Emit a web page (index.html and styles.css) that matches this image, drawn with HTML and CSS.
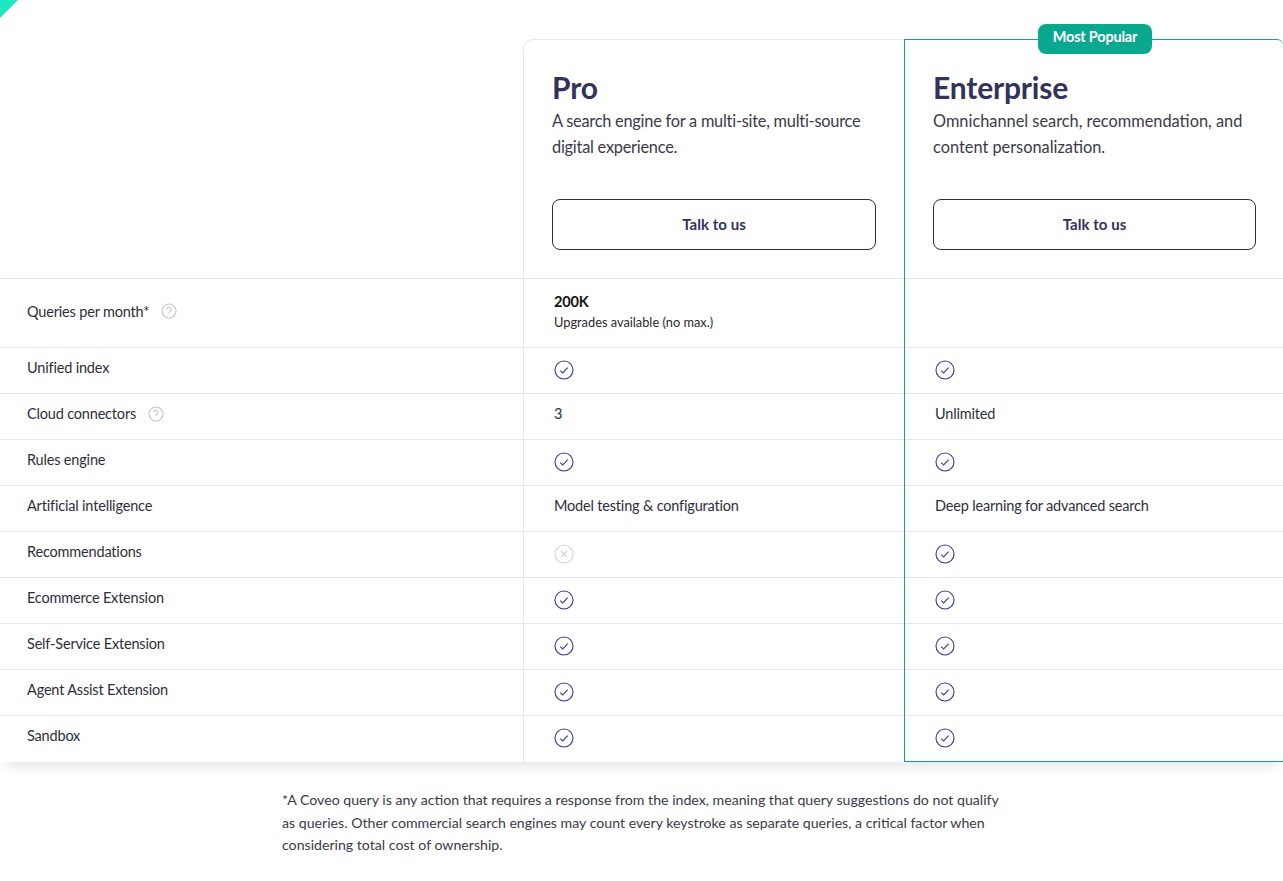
FILE: index.html
```html
<!DOCTYPE html>
<html lang="en">
<head>
<meta charset="utf-8">
<title>Plans</title>
<link rel="stylesheet" href="styles.css">
</head>
<body>
<div class="corner"></div>
<main class="page">
  <section class="plans">
    <div class="col col-labels">
      <div class="cell head"></div>
      <div class="cell tall">Queries per month*<svg class="help" viewBox="0 0 16 16"><circle cx="8" cy="8" r="7"/><path d="M5.9 6.3a2.1 2.1 0 1 1 3.3 1.7c-.8.5-1.2 1-1.2 1.8"/><path d="M8 11.4v.6"/></svg></div>
      <div class="cell">Unified index</div>
      <div class="cell">Cloud connectors<svg class="help" viewBox="0 0 16 16"><circle cx="8" cy="8" r="7"/><path d="M5.9 6.3a2.1 2.1 0 1 1 3.3 1.7c-.8.5-1.2 1-1.2 1.8"/><path d="M8 11.4v.6"/></svg></div>
      <div class="cell">Rules engine</div>
      <div class="cell">Artificial intelligence</div>
      <div class="cell">Recommendations</div>
      <div class="cell">Ecommerce Extension</div>
      <div class="cell">Self-Service Extension</div>
      <div class="cell">Agent Assist Extension</div>
      <div class="cell last">Sandbox</div>
    </div>

    <div class="col col-pro">
      <div class="cell head">
        <h2>Pro</h2>
        <p>A search engine for a multi-site, multi-source digital experience.</p>
        <a class="btn">Talk to us</a>
      </div>
      <div class="cell tall value"><div><strong>200K</strong><small>Upgrades available (no max.)</small></div></div>
      <div class="cell value"><svg class="check" viewBox="0 0 20 20"><circle cx="10" cy="10" r="9"/><path d="M6.3 10.6l2.4 2.3 5-5.3"/></svg></div>
      <div class="cell value">3</div>
      <div class="cell value"><svg class="check" viewBox="0 0 20 20"><circle cx="10" cy="10" r="9"/><path d="M6.3 10.6l2.4 2.3 5-5.3"/></svg></div>
      <div class="cell value">Model testing &amp; configuration</div>
      <div class="cell value"><svg class="cross" viewBox="0 0 20 20"><circle cx="10" cy="10" r="9"/><path d="M7 7l6 6M13 7l-6 6"/></svg></div>
      <div class="cell value"><svg class="check" viewBox="0 0 20 20"><circle cx="10" cy="10" r="9"/><path d="M6.3 10.6l2.4 2.3 5-5.3"/></svg></div>
      <div class="cell value"><svg class="check" viewBox="0 0 20 20"><circle cx="10" cy="10" r="9"/><path d="M6.3 10.6l2.4 2.3 5-5.3"/></svg></div>
      <div class="cell value"><svg class="check" viewBox="0 0 20 20"><circle cx="10" cy="10" r="9"/><path d="M6.3 10.6l2.4 2.3 5-5.3"/></svg></div>
      <div class="cell value last"><svg class="check" viewBox="0 0 20 20"><circle cx="10" cy="10" r="9"/><path d="M6.3 10.6l2.4 2.3 5-5.3"/></svg></div>
    </div>

    <div class="col col-ent">
      <span class="badge">Most Popular</span>
      <div class="cell head">
        <h2>Enterprise</h2>
        <p>Omnichannel search, recommendation, and content personalization.</p>
        <a class="btn">Talk to us</a>
      </div>
      <div class="cell tall value"></div>
      <div class="cell value"><svg class="check" viewBox="0 0 20 20"><circle cx="10" cy="10" r="9"/><path d="M6.3 10.6l2.4 2.3 5-5.3"/></svg></div>
      <div class="cell value">Unlimited</div>
      <div class="cell value"><svg class="check" viewBox="0 0 20 20"><circle cx="10" cy="10" r="9"/><path d="M6.3 10.6l2.4 2.3 5-5.3"/></svg></div>
      <div class="cell value">Deep learning for advanced search</div>
      <div class="cell value"><svg class="check" viewBox="0 0 20 20"><circle cx="10" cy="10" r="9"/><path d="M6.3 10.6l2.4 2.3 5-5.3"/></svg></div>
      <div class="cell value"><svg class="check" viewBox="0 0 20 20"><circle cx="10" cy="10" r="9"/><path d="M6.3 10.6l2.4 2.3 5-5.3"/></svg></div>
      <div class="cell value"><svg class="check" viewBox="0 0 20 20"><circle cx="10" cy="10" r="9"/><path d="M6.3 10.6l2.4 2.3 5-5.3"/></svg></div>
      <div class="cell value"><svg class="check" viewBox="0 0 20 20"><circle cx="10" cy="10" r="9"/><path d="M6.3 10.6l2.4 2.3 5-5.3"/></svg></div>
      <div class="cell value last"><svg class="check" viewBox="0 0 20 20"><circle cx="10" cy="10" r="9"/><path d="M6.3 10.6l2.4 2.3 5-5.3"/></svg></div>
    </div>
  </section>
  <p class="note">*A Coveo query is any action that requires a response from the index, meaning that query suggestions do not qualify as queries. Other commercial search engines may count every keystroke as separate queries, a critical factor when considering total cost of ownership.</p>
</main>
</body>
</html>
```
FILE: styles.css
```css
* { box-sizing: border-box; }
html, body { margin: 0; background: #fff; overflow: hidden; }
body {
  height: 881px;
  font-family: Lato, "Open Sans", sans-serif;
  color: #2b2b3a;
}
.corner {
  position: absolute;
  left: 0;
  top: 0;
  width: 0;
  height: 0;
  border-style: solid;
  border-width: 18px 18px 0 0;
  border-color: #1fe6be transparent transparent transparent;
}
.page { padding-top: 39px; }
.plans {
  display: grid;
  grid-template-columns: 523px 381px 379px;
  box-shadow: 0 9px 12px -6px rgba(40, 40, 60, .14);
}
.col { position: relative; background: #fff; }
.col-pro {
  border-left: 1px solid #e6e7ea;
  border-top: 1px solid #e6e7ea;
  border-top-left-radius: 10px;
}
.col-ent {
  border: 1px solid #1a9e9a;
  border-right: 0;
  border-top-right-radius: 6px;
}
.cell {
  height: 46px;
  border-bottom: 1px solid #e6e7ea;
  display: flex;
  align-items: center;
  padding: 0 0 6px 27px;
  font-size: 14.5px;
  letter-spacing: -.18px;
  color: #2e2e3a;
}
.cell.last { border-bottom: 0; height: 45px; }
.cell.tall { height: 69px; padding-bottom: 4px; }
.cell.head { height: 240px; display: block; padding: 0; }
.col-pro .cell.head { height: 239px; padding: 33px 28px 0 28px; }
.col-ent .cell.head { height: 239px; padding: 33px 27px 0 28px; }
.col-pro .value, .col-ent .value { padding-left: 30px; }
h2 {
  margin: 0;
  font-size: 30px;
  line-height: 28px;
  font-weight: 700;
  color: #33325a;
}
.head p {
  margin: 7px 0 0;
  height: 91px;
  font-size: 16.35px;
  line-height: 26px;
  letter-spacing: 0;
  color: #3a3a48;
}
.col-pro .head p { letter-spacing: -.24px; }
.btn {
  display: flex;
  align-items: center;
  justify-content: center;
  height: 51px;
  padding-bottom: 2px;
  border: 1px solid #2b2a48;
  border-radius: 8px;
  font-size: 15px;
  font-weight: 700;
  letter-spacing: .05px;
  color: #33325a;
}
.value strong {
  display: block;
  font-size: 14.5px;
  line-height: 20px;
  font-weight: 700;
  color: #111;
}
.value small {
  display: block;
  margin-top: 1px;
  font-size: 12.8px;
  line-height: 18px;
  letter-spacing: 0;
  color: #2a2a2a;
}
.check, .cross {
  width: 20px;
  height: 20px;
  fill: none;
  margin: 4px 0 0 -.5px;
  stroke-width: 1.15;
}
.check { stroke: #3b3f9c; }
.cross { stroke: #d6d6d6; }
.cross path { stroke-width: 1.6; }
.help {
  width: 16px;
  height: 16px;
  margin-left: 12px;
  fill: none;
  stroke: #c4c4c4;
  stroke-width: 1.1;
}
.badge {
  position: absolute;
  top: -16px;
  left: 133px;
  width: 114px;
  height: 30px;
  padding-bottom: 5px;
  background: #0ba890;
  border-radius: 8px;
  color: #fff;
  font-size: 14.5px;
  font-weight: 700;
  letter-spacing: -.2px;
  display: flex;
  align-items: center;
  justify-content: center;
}
.note {
  width: 725px;
  margin: 27px 0 0 282px;
  font-size: 14.15px;
  line-height: 22.5px;
  color: #3a3a48;
}
```
